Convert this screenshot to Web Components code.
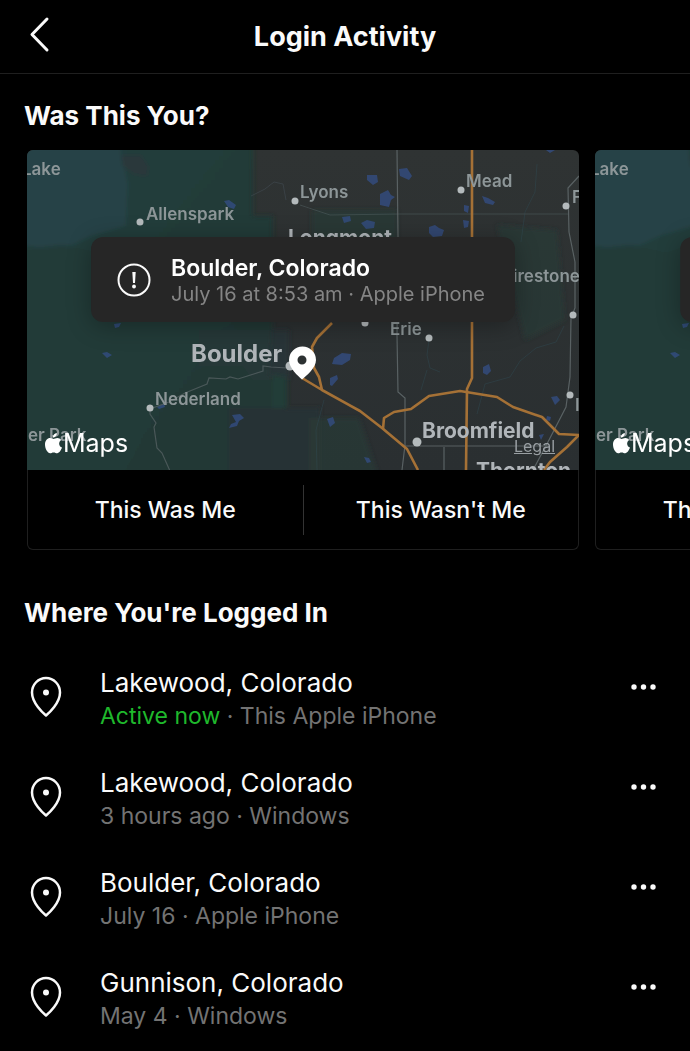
<!DOCTYPE html>
<html lang="en">
<head>
<meta charset="utf-8">
<meta name="viewport" content="width=device-width, initial-scale=1">
<title>Login Activity</title>
<style>
	body {
		margin: 0;
		background: #000;
		color: #fafafa;
		font-family: Inter, "Liberation Sans", sans-serif;
	}
</style>
</head>
<body>

<top-bar>Login Activity</top-bar>

<main>
	<page-section>
		<span slot="title">Was This You?</span>
		<card-scroller>
			<login-card>
				<map-callout slot="callout">
					Boulder, Colorado
					<span slot="detail">July 16 at 8:53 am · Apple iPhone</span>
				</map-callout>
			</login-card>
			<login-card>
				<map-callout slot="callout">
					Boulder, Colorado
					<span slot="detail">July 16 at 8:51 am · Windows</span>
				</map-callout>
			</login-card>
		</card-scroller>
	</page-section>

	<page-section>
		<span slot="title">Where You're Logged In</span>
		<session-row place="Lakewood, Colorado" active>This Apple iPhone</session-row>
		<session-row place="Lakewood, Colorado" when="3 hours ago">Windows</session-row>
		<session-row place="Boulder, Colorado" when="July 16">Apple iPhone</session-row>
		<session-row place="Gunnison, Colorado" when="May 4">Windows</session-row>
	</page-section>
</main>

<script>
(function() {
	"use strict";

	function render(el, html) {
		var template = document.createElement("template");
		template.innerHTML = html;
		el.attachShadow({ mode: "open" }).appendChild(template.content.cloneNode(true));
	}

	/*----------------------------------------
		Header
	------------------------------------------*/
	class TopBar extends HTMLElement {
		constructor() {
			super();
			render(this, `
				<style>
					:host { display: block; }
					header {
						display: grid;
						grid-template-columns: 80px 1fr 80px;
						align-items: center;
						height: 73px;
						border-bottom: 1px solid #1f1f1f;
					}
					button {
						justify-self: start;
						display: flex;
						margin: 0 0 6px 24px;
						padding: 0;
						border: 0;
						background: none;
						color: inherit;
					}
					h1 {
						margin: 0;
						font-size: 27px;
						line-height: 32px;
						font-weight: 700;
						text-align: center;
					}
				</style>
				<header>
					<button type="button" aria-label="Back">
						<svg width="32" height="40" viewBox="0 0 32 40" fill="none" stroke="currentColor" stroke-width="3" stroke-linecap="round" stroke-linejoin="round">
							<path d="M23 5 8 20.500 23 36"/>
						</svg>
					</button>
					<h1><slot></slot></h1>
				</header>
			`);
		}
	}

	class PageSection extends HTMLElement {
		constructor() {
			super();
			render(this, `
				<style>
					:host { display: block; padding-top: 26px; }
					:host(:nth-of-type(2)) { padding-top: 47px; }
					h2 {
						margin: 0 24px 18px;
						font-size: 26px;
						line-height: 32px;
						font-weight: 700;
					}
				</style>
				<section>
					<h2><slot name="title"></slot></h2>
					<slot></slot>
				</section>
			`);
		}
	}

	class CardScroller extends HTMLElement {
		constructor() {
			super();
			render(this, `
				<style>
					:host {
						display: flex;
						gap: 16px;
						padding: 0 27px;
						overflow-x: auto;
						scrollbar-width: none;
					}
				</style>
				<slot></slot>
			`);
		}
	}

	/*----------------------------------------
		Map
	------------------------------------------*/
	class AreaMap extends HTMLElement {
		constructor() {
			super();
			render(this, `
				<style>
					:host {
						display: block;
						position: relative;
						overflow: hidden;
						border-radius: 6px 6px 0 0;
					}
					.map { display: block; width: 100%; height: auto; }
					.label { font-size: 17px; font-weight: 600; fill: #8d9698; }
					.city { font-size: 21px; font-weight: 700; fill: #b0b5b9; }
					.main { font-size: 24px; }
					.brand {
						position: absolute;
						left: 17px;
						bottom: 11px;
						display: flex;
						align-items: center;
						color: #fff;
						font-size: 25px;
						line-height: 32px;
					}
					a {
						position: absolute;
						right: 24px;
						bottom: 14px;
						color: #999fa3;
						font-size: 16px;
						line-height: 20px;
					}
				</style>
				<svg class="map" viewBox="0 0 552 320" role="img" aria-label="Map of Boulder">
					<defs>
						<linearGradient id="forest" x1="0" y1="0" x2="1" y2="1">
							<stop offset="0" stop-color="#243f3e"/>
							<stop offset="1" stop-color="#233733"/>
						</linearGradient>
						<linearGradient id="plain" x1="0" y1="0" x2="0" y2="1">
							<stop offset="0" stop-color="#2f3333"/>
							<stop offset="1" stop-color="#2a2f31"/>
						</linearGradient>
						<filter id="soft" x="-10%" y="-10%" width="120%" height="120%">
							<feGaussianBlur stdDeviation="2"/>
						</filter>
					</defs>
					<path fill="url(#plain)" d="M0 0h552v320H0z"/>
					<g filter="url(#soft)">
						<path fill="url(#forest)" d="M-8-8h234v74h20v100l-4 60h18v30l-44 6-10 66H-8z"/>
						<path fill="#25434a" opacity=".8" d="M-8-8h100l9 42-2 42-34 10-30 14-43-5z"/>
						<path fill="#223a37" d="M-8 100l44-5 35 8 30-10 20 80 20 20-18 65-30 70H-8z"/>
						<path fill="#29393a" d="M94 5l20 0 8 12-2 10-14-3-10-8z"/>
						<path fill="#29373a" d="M172 180h90v50h-36l-10-14h-44z" opacity=".6"/>
						<path fill="#243d38" d="M246 224l13 3v43l-15 4z"/>
						<path fill="#283335" d="M202 258h91v70h-91z"/>
						<path fill="#293a36" opacity=".6" d="M285 60h85v45h-85zM282 268h50l20 60h-70zM470 75l60 5 8 90-40 20z"/>
					</g>
					<g fill="#344f87" opacity=".75">
						<path d="M340 25l10 0 1 7-5 3-6-5zM372 19l8-1 5 8-3 4-9-4zM353 44l8-4 3 5 4 2-4 3-2 7-9-2zM315 67l8-1 1 5-7 2zM334 73l6-3 8 2-1 6-8 1zM402 77l6-2 4 3 5 2-2 6-9 1-4-4zM455 46l6 2 7 4-2 3-8-2zM437 55l5 1-1 7-4-2zM436 70l6 1-1 6-4 1zM519 0h9l-5 3zM197 51l5-1 7 5-2 4-6-2z"/>
						<path d="M307 208l8-5 9 1-1 6-8 5-10-1zM303 228l7-3 1 4-6 7-2-1zM300 269l6-2 2 6-5 4zM456 217l6-3 2 7-4 4-4-2zM524 247l6-1 3 4-5 5zM520 266l4 1-1 4-4-1zM337 307l5 1 2 4-4 1zM205 265l8-1 4 4-5 3-2 5-8 2 2-4 5-2zM87 174l7-1-2 4-4 1zM75 203l5-1 5 3-5 3zM130 257l7-3 1 3-6 2zM512 285l5-1-3 6z"/>
					</g>
					<g fill="none" stroke="#304951" opacity=".5">
						<path d="M402 190l-2 15 3 13 10 4M400 220l-6 20M510 14l-2 28-10 20-4 30M537 176l-8 16-20 6-16 13-10 16-25 7-8 30M297 250l-8 30 1 40"/>
						<path d="M224 46l14-7 9-7 9 2 3 16" stroke="#46515a"/>
						<path d="M273 55l30 10 70-1 168 0" stroke="#526062"/>
					</g>
					<g fill="none" stroke="#626b6d" stroke-width="1.200" opacity=".85">
						<path d="M370 0l1 87-1 98 1 57 7 6v47l-3 25M378 296h143M417 297v23"/>
						<path d="M552 26l-11 12 1 44 6 30v46l-4 10-1 59-4 30-17 33-16 30"/>
						<path d="M260 218l-16-1-8-1v5l-25 8-8-2-4 2-17-1-2 6-22 9-16 9-19 7 0 5 6 9-2 4 3 21 5 5 8 18" opacity=".75"/>
					</g>
					<g fill="none" stroke="#a57136" stroke-width="2.600" stroke-linejoin="round">
						<path d="M445 0v228l-5 11-1 81"/>
						<path d="M275 228l20 12 38 21 22 17 25 21 11 21M295 240l-3-13-5-9-2-21 5-9 15-15"/>
						<path d="M356 279l1-11 10-6 17-3 18-13 31-5 37 6 16 10 29 10 17 17 20 1-12 12-17 15-6 8"/>
					</g>
					<g fill="#b4babc">
						<circle cx="268" cy="51" r="3.500"/>
						<circle cx="113" cy="72" r="3.500"/>
						<circle cx="434" cy="40" r="3.500"/>
						<circle cx="539" cy="56" r="3.500"/>
						<circle cx="546" cy="165" r="3.500"/>
						<circle cx="402" cy="188" r="3.500"/>
						<circle cx="338" cy="173" r="3.500"/>
						<circle cx="543" cy="245" r="3.500"/>
						<circle cx="123" cy="258" r="3.500"/>
						<circle cx="390" cy="292" r="4.500"/>
						<circle cx="263" cy="216" r="4.500"/>
					</g>
					<g class="label">
						<text x="-5" y="25">Lake</text>
						<text x="119" y="70">Allenspark</text>
						<text x="273" y="48">Lyons</text>
						<text x="439" y="37">Mead</text>
						<text x="545" y="53">F</text>
						<text x="486" y="132">irestone</text>
						<text x="363" y="185">Erie</text>
						<text x="128" y="255">Nederland</text>
						<text x="548" y="261">I</text>
						<text x="1" y="291">er Park</text>
					</g>
					<g class="city">
						<text x="261" y="95">Longmont</text>
						<text class="main" x="164" y="212">Boulder</text>
						<text x="395" y="288">Broomfield</text>
						<text x="449" y="328">Thornton</text>
					</g>
					<path fill="#fff" fill-rule="evenodd" d="M275 229.500C271 226 262 218 262 210a13.500 13.500 0 0 1 27 0c0 8-10 16-14 19.500zm0-24a4.500 4.500 0 1 0 .01 9 4.500 4.500 0 0 0-.01-9z"/>
				</svg>
				<div class="brand">
					<svg width="19" height="23" viewBox="0 0 19 23" fill="currentColor" aria-hidden="true">
						<path d="M12.800 1c.2 2.400-1.600 4.500-3.900 4.500C8.700 3.300 10.600 1.200 12.800 1zM9.500 7c1 0 2-1 3.900-1 1.500 0 3 .8 3.900 2-3.200 1.900-2.700 6.300.7 7.600-.8 2.200-2.600 5.700-4.800 5.700-1.400 0-1.900-.8-3.600-.8s-2.200.8-3.500.8C3.700 21.300 1 16.900 1 12.600 1 8.500 3.500 6.100 6 6.100 7.600 6.100 8.700 7 9.500 7z"/>
					</svg>
					<span>Maps</span>
				</div>
				<a href="#legal">Legal</a>
			`);
		}
	}

	class MapCallout extends HTMLElement {
		constructor() {
			super();
			render(this, `
				<style>
					:host {
						display: flex;
						align-items: center;
						gap: 20px;
						box-sizing: border-box;
						height: 85px;
						padding: 0 30px 0 26px;
						border-radius: 12px;
						background: #262626;
						box-shadow: 0 4px 24px rgba(0, 0, 0, .3);
						white-space: nowrap;
					}
					svg { flex: none; }
					.place { font-size: 23px; line-height: 28px; font-weight: 600; color: #fff; }
					.detail { font-size: 20px; line-height: 24px; color: #858585; }
				</style>
				<svg width="34" height="34" viewBox="0 0 34 34" fill="none" stroke="#fafafa" aria-hidden="true">
					<circle cx="17" cy="17" r="15.500" stroke-width="2"/>
					<path d="M15.300 9h3.400l-.7 11h-2z" fill="#fafafa" stroke="none"/>
					<circle cx="17" cy="23.500" r="1.900" fill="#fafafa" stroke="none"/>
				</svg>
				<div>
					<div class="place"><slot></slot></div>
					<div class="detail"><slot name="detail"></slot></div>
				</div>
			`);
		}
	}

	class LoginCard extends HTMLElement {
		constructor() {
			super();
			render(this, `
				<style>
					:host {
						display: block;
						flex: 0 0 80vw;
						position: relative;
					}
					/* floats over the map, centred */
					::slotted(map-callout) {
						position: absolute;
						top: 87px;
						left: 50%;
						transform: translateX(-50%);
					}
					.actions {
						display: flex;
						align-items: center;
						box-sizing: border-box;
						height: 80px;
						border: 1px solid #1f1f1f;
						border-top: 0;
						border-radius: 0 0 6px 6px;
					}
					button {
						flex: 1;
						height: 50px;
						padding: 0;
						border: 0;
						background: none;
						color: inherit;
						font: 500 23px/28px Inter, "Liberation Sans", sans-serif;
					}
					button + button { border-left: 1px solid #333; }
				</style>
				<area-map></area-map>
				<slot name="callout"></slot>
				<div class="actions">
					<button type="button">This Was Me</button>
					<button type="button">This Wasn't Me</button>
				</div>
			`);
		}
	}

	/*----------------------------------------
		Sessions
	------------------------------------------*/
	class SessionRow extends HTMLElement {
		constructor() {
			super();
			render(this, `
				<style>
					:host {
						display: flex;
						align-items: flex-start;
						box-sizing: border-box;
						height: 100px;
						padding: 19px 28px 0 30px;
					}
					.pin { flex: none; margin: 10px 38px 0 0; }
					.text { flex: 1; min-width: 0; }
					.place { font-size: 26px; line-height: 34px; }
					.detail { font-size: 23px; line-height: 32px; color: #737373; }
					:host([active]) .when { color: #1fb82c; }
					button {
						display: flex;
						margin-top: 6px;
						padding: 0;
						border: 0;
						background: none;
						color: inherit;
					}
				</style>
				<svg class="pin" width="32" height="42" viewBox="0 0 32 42" fill="none" stroke="#fafafa" stroke-width="2.500" stroke-linejoin="round" aria-hidden="true">
					<path d="M16 39.500C13 37 2 27 2 16.500a14 14.500 0 0 1 28 0C30 27 19 37 16 39.500z"/>
					<circle cx="16" cy="16.500" r="3" fill="#fafafa" stroke="none"/>
				</svg>
				<div class="text">
					<div class="place"></div>
					<div class="detail"><span class="when"></span> · <slot></slot></div>
				</div>
				<button type="button" aria-label="More options">
					<svg width="36" height="30" viewBox="0 0 36 30" fill="currentColor">
						<circle cx="8" cy="15" r="2.700"/>
						<circle cx="17.500" cy="15" r="2.700"/>
						<circle cx="27" cy="15" r="2.700"/>
					</svg>
				</button>
			`);
		}

		connectedCallback() {
			this.shadowRoot.querySelector(".place").textContent = this.getAttribute("place");
			this.shadowRoot.querySelector(".when").textContent = this.hasAttribute("active") ? "Active now" : this.getAttribute("when");
		}
	}

	customElements.define("top-bar", TopBar);
	customElements.define("page-section", PageSection);
	customElements.define("card-scroller", CardScroller);
	customElements.define("area-map", AreaMap);
	customElements.define("map-callout", MapCallout);
	customElements.define("login-card", LoginCard);
	customElements.define("session-row", SessionRow);
})();
</script>
</body>
</html>
